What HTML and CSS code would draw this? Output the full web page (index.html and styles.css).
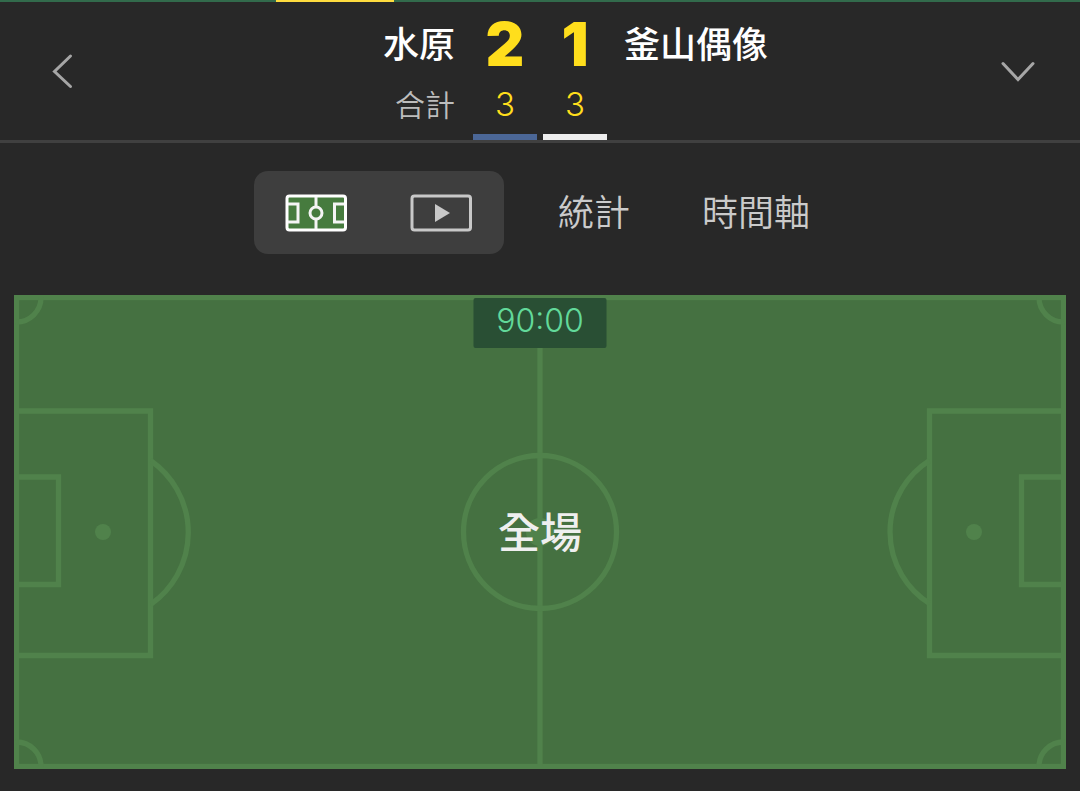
FILE: index.html
```html
<!DOCTYPE html>
<html lang="zh-Hant">
<head>
<meta charset="utf-8">
<meta name="viewport" content="width=device-width, initial-scale=1">
<title>水原 2 - 1 釜山偶像</title>
<link rel="stylesheet" href="styles.css">
</head>
<body>
<div class="topline"><span class="topline-active"></span></div>
<header class="header">
  <button class="nav-button" type="button" aria-label="返回">
    <svg width="22" height="36" viewBox="0 0 22 36"><path d="M19.500 3 3.500 18.500 19.500 33.500" fill="none" stroke="#a6a6a6" stroke-width="3" stroke-linecap="round"/></svg>
  </button>
  <div class="scoreboard">
    <span class="team home">水原</span>
    <span class="score">2</span>
    <span class="score">1</span>
    <span class="team away">釜山偶像</span>
    <span class="total-label">合計</span>
    <span class="total kit-blue">3</span>
    <span class="total kit-white">3</span>
  </div>
  <button class="nav-button" type="button" aria-label="展開">
    <svg width="36" height="22" viewBox="0 0 36 22"><path d="M3 3.500 18 19.500 33 3.500" fill="none" stroke="#a6a6a6" stroke-width="3" stroke-linecap="round"/></svg>
  </button>
</header>
<nav class="tabs">
  <div class="view-switch">
    <button class="view-button" type="button" aria-label="球場">
      <svg width="62" height="38" viewBox="0 0 62 38">
        <rect x="2" y="2" width="58.500" height="34" rx="2.500" fill="#467b3e" stroke="#fff" stroke-width="3"/>
        <g fill="none" stroke="#f4f4f4" stroke-width="3"><path d="M3 10h10v18H3M59 10H49.500v18H59M31 3v10M31 25v10"/><circle cx="31" cy="19" r="6"/></g>
      </svg>
    </button>
    <button class="view-button" type="button" aria-label="影片">
      <svg width="62" height="38" viewBox="0 0 62 38">
        <rect x="2" y="2" width="58.500" height="34" rx="2.500" fill="none" stroke="#c8c8c8" stroke-width="3"/>
        <path d="M25 10 40 19 25 28z" fill="#c8c8c8"/>
      </svg>
    </button>
  </div>
  <button class="tab" type="button">統計</button>
  <button class="tab" type="button">時間軸</button>
</nav>
<main class="field">
  <svg class="pitch" viewBox="0 0 1052 474">
    <rect width="1052" height="474" fill="#457141"/>
    <g fill="none" stroke="#50824b" stroke-width="5.300">
      <rect x="2.500" y="2.500" width="1047" height="469"/>
      <path d="M526 3V471M3 116H136.500V360.500H3M3 182H44.500V289.500H3M1049 116H915.500V360.500H1049M1049 182H1007.500V289.500H1049"/>
      <circle cx="526" cy="237" r="76.500"/>
      <path d="M136.500 165.500A87.500 87.500 0 0 1 136.500 309.500M915.500 165.500A84.500 84.500 0 0 0 915.500 308.500"/>
      <path d="M27 2A24.500 24.500 0 0 1 2 27M1025 2A24.500 24.500 0 0 0 1050 27M27 472A24.500 24.500 0 0 0 2 447M1025 472A24.500 24.500 0 0 1 1050 447"/>
    </g>
    <g fill="#50824b"><circle cx="89" cy="237" r="8"/><circle cx="960" cy="237" r="8"/><circle cx="526" cy="237" r="14"/></g>
  </svg>
  <time class="clock">90:00</time>
  <strong class="status">全場</strong>
</main>
</body>
</html>
```
FILE: styles.css
```css
* {
  box-sizing: border-box;
}

body {
  margin: 0;
  background: #282828;
  color: #fff;
  font-family: Inter, "Noto Sans CJK TC", sans-serif;
}

button {
  margin: 0;
  padding: 0;
  border: 0;
  background: none;
  color: inherit;
  font: inherit;
  cursor: pointer;
}

svg {
  display: block;
}

.topline {
  display: flex;
  justify-content: center;
  height: 2px;
  padding-right: 38%;
  background: #326b4c;
}

.topline-active {
  width: 118px;
  background: #ffdc3f;
}

.header {
  display: flex;
  border-bottom: 3px solid #404040;
}

.nav-button {
  display: flex;
  flex: 0 0 124px;
  align-items: center;
  justify-content: center;
}

.scoreboard {
  display: grid;
  flex: 1;
  grid-template-columns: 1fr 64px 64px 1fr;
  grid-template-rows: 84px 54px;
  column-gap: 6px;
  align-items: center;
  white-space: nowrap;
}

.team {
  padding-top: 2px;
  font-size: 36px;
  font-weight: 500;
  line-height: 84px;
}

.home,
.total-label {
  padding-right: 12px;
  text-align: right;
}

.away {
  padding-left: 11px;
}

.score {
  color: #ffde1c;
  font-size: 60px;
  font-weight: 900;
  line-height: 84px;
  text-align: center;
}

.total-label {
  color: #bdbdbd;
  font-size: 30px;
  font-weight: 350;
  line-height: 38px;
  align-self: start;
}

.total {
  height: 54px;
  border-bottom: 6px solid;
  font-size: 33px;
  font-weight: 300;
  line-height: 36px;
  text-align: center;
  color: #ffde1c;
}

.kit-blue {
  border-color: #4b6797;
}

.kit-white {
  border-color: #ededed;
}

.tabs {
  display: flex;
  justify-content: center;
  padding: 28px 0 41px 20px;
}

.view-switch {
  display: flex;
  margin-right: 18px;
  border-radius: 14px;
  background: #3e3e3e;
}

.view-button {
  display: flex;
  width: 125px;
  height: 83px;
  align-items: center;
  justify-content: center;
}

.tab {
  padding: 0 36px 6px;
  color: #cbcbcb;
  font-size: 36px;
  font-weight: 350;
}

.field {
  position: relative;
  margin: 0 14px 22px;
}

.pitch {
  width: 100%;
  height: auto;
}

.clock {
  position: absolute;
  top: 3px;
  left: 50%;
  width: 133px;
  height: 50px;
  border-radius: 2px;
  background: #294f34;
  color: #62d99a;
  font-size: 32px;
  font-weight: 300;
  line-height: 46px;
  text-align: center;
  transform: translateX(-50%);
}

.status {
  position: absolute;
  inset: 0;
  display: flex;
  align-items: center;
  justify-content: center;
  padding-bottom: 6px;
  color: #efefef;
  font-size: 42px;
  font-weight: 500;
}
```
